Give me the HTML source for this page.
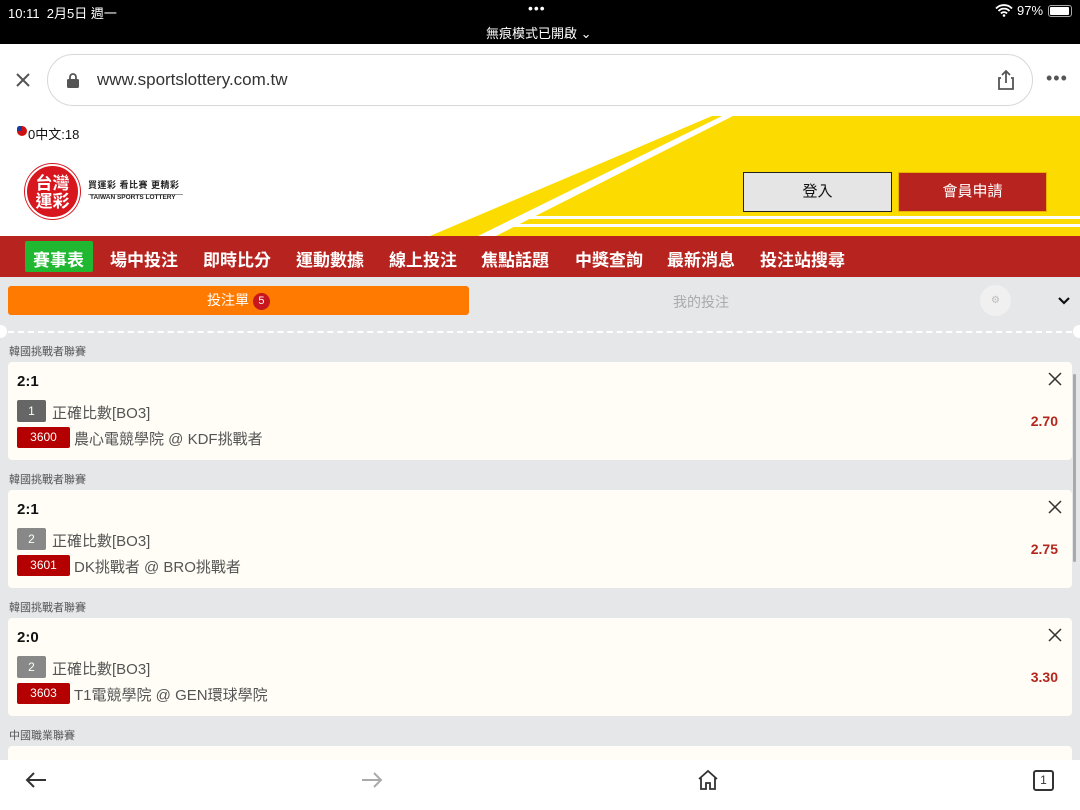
<!DOCTYPE html>
<html style="overflow:hidden;width:1080px;height:810px"><head><meta charset="utf-8"><style>
*{margin:0;padding:0;box-sizing:border-box}
body{width:1080px;height:810px;overflow:hidden;font-family:"Liberation Sans","Noto Sans CJK TC",sans-serif;background:#e6e7e9;position:relative}
.abs{position:absolute}
.status{left:0;top:0;width:1080px;height:44px;background:#000;color:#fff;font-size:13px}
.toolbar{left:0;top:44px;width:1080px;height:66px;background:#fff}
.pill{left:47px;top:54px;width:986px;height:52px;border:1px solid #d8d8d8;border-radius:26px;background:#fff}
.header{left:0;top:110px;width:1080px;height:126px;background:#fff;overflow:hidden}
.nav{left:0;top:236px;width:1080px;height:41px;background:#b7231e;color:#fff;font-size:17px;font-weight:bold}
.nav span{position:absolute;top:10px}
.card{left:8px;width:1064px;height:98px;background:#fffdf5;border-radius:4px}
.lbl{left:9px;font-size:11px;color:#555}
.score{position:absolute;left:9px;top:11px;font-size:15px;font-weight:bold;color:#111}
.n{position:absolute;left:9px;top:38px;width:29px;height:22px;color:#fff;font-size:12px;text-align:center;line-height:22px;border-radius:2px}
.t1{position:absolute;left:44px;top:40px;font-size:15px;color:#555}
.code{position:absolute;left:9px;top:65px;width:53px;height:21px;background:#b40000;color:#fff;font-size:12px;text-align:center;line-height:21px;border-radius:2px}
.t2{position:absolute;left:66px;top:66px;font-size:15px;color:#555}
.odds{position:absolute;right:14px;top:51px;font-size:14px;font-weight:bold;color:#b3261e}
.x{position:absolute;right:10px;top:10px}
.bottom{left:0;top:760px;width:1080px;height:50px;background:#fff}
</style></head><body>
<div class="abs status">
 <span class="abs" style="left:8px;top:3px">10:11&nbsp;&nbsp;2月5日 週一</span>
 <span class="abs" style="left:528px;top:0;font-size:14px;letter-spacing:1px">•••</span>
 <span class="abs" style="left:486px;top:23px;font-size:13px">無痕模式已開啟 ⌄</span>
 <span class="abs" style="left:1017px;top:3px">97%</span>
 <div class="abs" style="left:1048px;top:5px;width:24px;height:12px;border:1px solid #aaa;border-radius:3px"><div style="margin:1px;width:19px;height:8px;background:#fff;border-radius:1px"></div></div>
 <svg class="abs" style="left:995px;top:4px" width="18" height="13" viewBox="0 0 18 13"><path d="M1 4.5a11 11 0 0 1 16 0M3.5 7a7.5 7.5 0 0 1 11 0M6 9.5a4 4 0 0 1 6 0" stroke="#fff" stroke-width="1.8" fill="none"/><circle cx="9" cy="11.5" r="1.3" fill="#fff"/></svg>
</div>
<div class="abs toolbar"></div>
<svg class="abs" style="left:15px;top:72px" width="16" height="16"><path d="M2 2L14 14M14 2L2 14" stroke="#555" stroke-width="2"/></svg>
<div class="abs pill"></div>
<svg class="abs" style="left:66px;top:72px" width="14" height="16"><rect x="1" y="7" width="12" height="9" rx="1.5" fill="#555"/><path d="M4 7V5a3 3 0 0 1 6 0v2" stroke="#555" stroke-width="1.8" fill="none"/></svg>
<div class="abs" style="left:97px;top:70px;font-size:17px;color:#333">www.sportslottery.com.tw</div>
<svg class="abs" style="left:996px;top:69px" width="20" height="22"><path d="M10 2v12M6 6l4-4 4 4M5 9H3v11h14V9h-2" stroke="#555" stroke-width="1.8" fill="none"/></svg>
<div class="abs" style="left:1046px;top:68px;font-size:18px;color:#555;letter-spacing:1px">•••</div>

<div class="abs header">
 <svg class="abs" style="left:0;top:0" width="1080" height="126">
  <polygon points="430,126 712,6 722,6 478,126" fill="#fcdc00"/>
  <polygon points="496,126 733,6 1080,6 1080,126" fill="#fcdc00"/>
  <rect x="530" y="106" width="550" height="3" fill="#fff"/>
  <rect x="512" y="114" width="568" height="3" fill="#fff"/>
 </svg>
 <div class="abs" style="left:17px;top:16px;width:10px;height:10px;border-radius:50%;background:#d01010"><div style="width:5px;height:5px;background:#1a3c99;border-radius:50% 0 0 0"></div></div>
 <div class="abs" style="left:28px;top:14px;font-size:13px;color:#111">0中文:18</div>
 <div class="abs" style="left:25px;top:54px;width:55px;height:55px;border-radius:50%;background:#d7161e;border:2px solid #fff;box-shadow:0 0 0 1px #d7161e;color:#fff;font-size:17px;font-weight:bold;line-height:18px;text-align:center;padding-top:9px">台灣<br>運彩</div>
 <div class="abs" style="left:88px;top:68px;font-size:9px;color:#222;font-weight:bold;border-bottom:1px solid #999;padding-bottom:3px;width:95px;letter-spacing:0.5px">買運彩 看比賽 更精彩</div>
 <div class="abs" style="left:90px;top:84px;font-size:6.5px;color:#222;font-weight:bold">TAIWAN SPORTS LOTTERY</div>
 <div class="abs" style="left:743px;top:62px;width:149px;height:40px;background:#e5e5e5;border:1px solid #222;font-size:15px;text-align:center;line-height:38px;color:#111">登入</div>
 <div class="abs" style="left:898px;top:62px;width:149px;height:40px;background:#b7231e;border:1px solid #e8b000;font-size:15px;text-align:center;line-height:38px;color:#fff">會員申請</div>
</div>
<div class="abs nav">
 <div class="abs" style="left:25px;top:5px;width:68px;height:31px;background:#20b830;border-radius:2px"></div>
 <span style="left:33px">賽事表</span><span style="left:110px">場中投注</span><span style="left:203px">即時比分</span><span style="left:296px">運動數據</span><span style="left:389px">線上投注</span><span style="left:481px">焦點話題</span><span style="left:575px">中獎查詢</span><span style="left:667px">最新消息</span><span style="left:760px">投注站搜尋</span>
</div>
<div class="abs" style="left:8px;top:286px;width:461px;height:29px;background:#ff7a00;border-radius:3px;color:#fff;font-size:14px;text-align:center;line-height:29px">投注單 <span style="display:inline-block;width:17px;height:17px;border-radius:50%;background:#c8161e;font-size:11px;line-height:17px;vertical-align:1px">5</span></div>
<div class="abs" style="left:673px;top:292px;font-size:14px;color:#aaa">我的投注</div>
<div class="abs" style="left:980px;top:285px;width:31px;height:31px;border-radius:50%;background:#f0f0f0;color:#bbb;font-size:10px;text-align:center;line-height:31px">⚙</div>
<svg class="abs" style="left:1057px;top:296px" width="14" height="10"><path d="M2 2l5 5 5-5" stroke="#111" stroke-width="2.2" fill="none"/></svg>
<div class="abs" style="left:8px;top:331px;width:1064px;border-top:2px dashed #fff"></div>
<div class="abs" style="left:-6px;top:325px;width:13px;height:13px;border-radius:50%;background:#fff"></div>
<div class="abs" style="left:1073px;top:325px;width:13px;height:13px;border-radius:50%;background:#fff"></div>

<div class="abs lbl" style="top:343px">韓國挑戰者聯賽</div>
<div class="abs card" style="top:362px"><div class="score">2:1</div><div class="n" style="background:#666">1</div><div class="t1">正確比數[BO3]</div><div class="code">3600</div><div class="t2">農心電競學院 @ KDF挑戰者</div><div class="odds">2.70</div><svg class="x" width="14" height="14"><path d="M1 1l12 12M13 1L1 13" stroke="#333" stroke-width="1.5"/></svg></div>
<div class="abs lbl" style="top:471px">韓國挑戰者聯賽</div>
<div class="abs card" style="top:490px"><div class="score">2:1</div><div class="n" style="background:#888">2</div><div class="t1">正確比數[BO3]</div><div class="code">3601</div><div class="t2">DK挑戰者 @ BRO挑戰者</div><div class="odds">2.75</div><svg class="x" width="14" height="14"><path d="M1 1l12 12M13 1L1 13" stroke="#333" stroke-width="1.5"/></svg></div>
<div class="abs lbl" style="top:599px">韓國挑戰者聯賽</div>
<div class="abs card" style="top:618px"><div class="score">2:0</div><div class="n" style="background:#888">2</div><div class="t1">正確比數[BO3]</div><div class="code">3603</div><div class="t2">T1電競學院 @ GEN環球學院</div><div class="odds">3.30</div><svg class="x" width="14" height="14"><path d="M1 1l12 12M13 1L1 13" stroke="#333" stroke-width="1.5"/></svg></div>
<div class="abs lbl" style="top:727px">中國職業聯賽</div>
<div class="abs card" style="top:746px;height:14px;border-radius:4px 4px 0 0"></div>
<div class="abs" style="left:1073px;top:374px;width:3px;height:188px;background:#aaa;border-radius:2px"></div>

<div class="abs bottom"></div>
<svg class="abs" style="left:24px;top:770px" width="24" height="20"><path d="M22 10H3M10 3l-7 7 7 7" stroke="#333" stroke-width="2" fill="none"/></svg>
<svg class="abs" style="left:360px;top:770px" width="24" height="20"><path d="M2 10h19M14 3l7 7-7 7" stroke="#aaa" stroke-width="2" fill="none"/></svg>
<svg class="abs" style="left:697px;top:769px" width="22" height="22"><path d="M2 10L11 2l9 8M4 8v12h5v-6h4v6h5V8" stroke="#333" stroke-width="1.8" fill="none"/></svg>
<div class="abs" style="left:1033px;top:770px;width:21px;height:21px;border:2px solid #333;border-radius:3px;font-size:12px;text-align:center;line-height:17px;color:#333">1</div>
</body></html>
